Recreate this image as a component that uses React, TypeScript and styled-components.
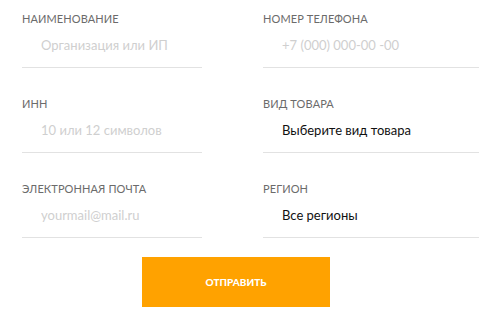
import styled, { createGlobalStyle } from 'styled-components';

const GlobalStyle = createGlobalStyle`
  body {
    margin: 0;
    background: #fff;
    font-family: Lato, "Open Sans", sans-serif;
  }
`;

const Form = styled.form`
  padding: 12px 0 0 22px;
  width: 499px;
  box-sizing: border-box;
`;

const Grid = styled.div`
  display: grid;
  grid-template-columns: 180px 216px;
  column-gap: 61px;
  row-gap: 29px;
`;

const Field = styled.label`
  display: flex;
  flex-direction: column;
`;

const Label = styled.span`
  font-size: 11px;
  line-height: 13px;
  color: #6b6b6b;
  text-transform: uppercase;
  letter-spacing: 0.1px;
`;

const Input = styled.input`
  height: 43px;
  box-sizing: border-box;
  border: none;
  border-bottom: 1px solid #e2e2e2;
  padding: 0 0 2px 19px;
  font-family: inherit;
  font-size: 13px;
  color: #111;
  outline: none;
  background: transparent;

  &::placeholder {
    color: #cfcfcf;
  }
`;

const Select = styled.div`
  height: 43px;
  box-sizing: border-box;
  border-bottom: 1px solid #e2e2e2;
  padding: 0 0 2px 19px;
  font-size: 13px;
  color: #111;
  display: flex;
  align-items: center;
`;

const Footer = styled.div`
  padding: 19px 0 0 120px;
`;

const Button = styled.button`
  width: 188px;
  height: 50px;
  border: none;
  background: #ffa200;
  color: #fff;
  font-family: inherit;
  font-weight: 900;
  font-size: 10px;
  text-transform: uppercase;
  cursor: pointer;
`;

const App = () => {
  return (
    <>
      <GlobalStyle />
      <Form onSubmit={(e) => e.preventDefault()}>
        <Grid>
          <Field>
            <Label>Наименование</Label>
            <Input placeholder="Организация или ИП" />
          </Field>
          <Field>
            <Label>Номер телефона</Label>
            <Input placeholder="+7 (000) 000-00 -00" />
          </Field>
          <Field>
            <Label>ИНН</Label>
            <Input placeholder="10 или 12 символов" />
          </Field>
          <Field>
            <Label>Вид товара</Label>
            <Select>Выберите вид товара</Select>
          </Field>
          <Field>
            <Label>Электронная почта</Label>
            <Input placeholder="yourmail@mail.ru" />
          </Field>
          <Field>
            <Label>Регион</Label>
            <Select>Все регионы</Select>
          </Field>
        </Grid>
        <Footer>
          <Button type="submit">Отправить</Button>
        </Footer>
      </Form>
    </>
  );
};

export default App;
